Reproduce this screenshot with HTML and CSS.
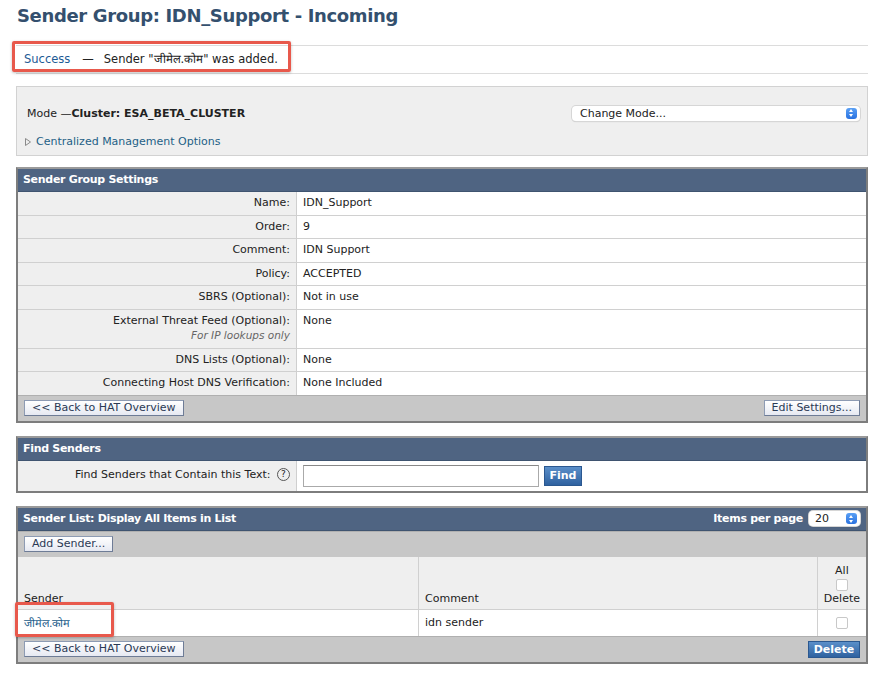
FILE: index.html
```html
<!DOCTYPE html>
<html>
<head>
<meta charset="utf-8">
<link rel="stylesheet" href="styles.css">
</head>
<body>
<h1 class="title">Sender Group: IDN_Support - Incoming</h1>

<div class="notice">
  <span class="ok">Success</span><span class="dash">—</span>Sender "जीमेल.कोम" was added.
  <span class="callout callout-notice"></span>
</div>

<div class="mode">
  <div class="mode-row">
    <div class="mode-text">Mode —<b>Cluster: ESA_BETA_CLUSTER</b></div>
    <div class="select select-mode"><span>Change Mode...</span><span class="stepper"></span></div>
  </div>
  <div class="cmo"><svg class="tri" width="6" height="8" viewBox="0 0 6 8"><polygon points="0.5,0.5 5.5,4 0.5,7.5" fill="none" stroke="#8a8a8a" stroke-width="1"/></svg>Centralized Management Options</div>
</div>

<div class="panel panel-first">
  <div class="phead">Sender Group Settings</div>
  <table class="grid">
    <tr><th>Name:</th><td>IDN_Support</td></tr>
    <tr><th>Order:</th><td>9</td></tr>
    <tr><th>Comment:</th><td>IDN Support</td></tr>
    <tr><th>Policy:</th><td>ACCEPTED</td></tr>
    <tr><th>SBRS (Optional):</th><td>Not in use</td></tr>
    <tr><th>External Threat Feed (Optional):<br><i class="hint">For IP lookups only</i></th><td>None</td></tr>
    <tr><th>DNS Lists (Optional):</th><td>None</td></tr>
    <tr><th>Connecting Host DNS Verification:</th><td>None Included</td></tr>
  </table>
  <div class="pfoot">
    <span class="btn">&lt;&lt; Back to HAT Overview</span>
    <span class="btn">Edit Settings...</span>
  </div>
</div>

<div class="panel">
  <div class="phead">Find Senders</div>
  <table class="grid">
    <tr class="find-row"><th>Find Senders that Contain this Text: <span class="help">?</span></th>
      <td><span class="input"></span><span class="btn-blue btn-find">Find</span></td></tr>
  </table>
</div>

<div class="panel">
  <div class="phead phead-split">
    <span>Sender List: Display All Items in List</span>
    <span class="ipp">Items per page <span class="select select-ipp"><span>20</span><span class="stepper"></span></span></span>
  </div>
  <div class="pbar"><span class="btn">Add Sender...</span></div>
  <table class="list">
    <tr class="lhead">
      <td class="c-sender">Sender</td>
      <td class="c-comment">Comment</td>
      <td class="c-del">All<br><span class="chk"></span><br>Delete</td>
    </tr>
    <tr class="lrow">
      <td class="c-sender"><span class="link">जीमेल.कोम</span><span class="callout callout-row"></span></td>
      <td class="c-comment">idn sender</td>
      <td class="c-del"><span class="chk chk-row"></span></td>
    </tr>
  </table>
  <div class="pfoot">
    <span class="btn">&lt;&lt; Back to HAT Overview</span>
    <span class="btn-blue btn-del">Delete</span>
  </div>
</div>
</body>
</html>
```

FILE: styles.css
```css
html, body { margin: 0; padding: 0; background: #fff; }
body {
  padding: 0 5px 0 16px;
  font-family: "DejaVu Sans", Verdana, sans-serif;
  font-size: 11px;
  color: #222;
}
.title {
  margin: 0;
  padding: 5px 0 0 1px;
  height: 34px;
  font-size: 18px;
  font-weight: bold;
  color: #34506e;
  letter-spacing: -0.35px;
}
.notice {
  position: relative;
  margin-top: 6px;
  height: 27px;
  border-top: 1px solid #dcdcdc;
  border-bottom: 1px solid #dcdcdc;
  display: flex;
  align-items: center;
  padding-left: 8px;
  padding-bottom: 2px;
  box-sizing: border-box;
  height: 29px;
  font-size: 11.5px;
}
.ok { color: #1d5a94; }
.dash { margin: 0 10px 0 12px; }
.callout {
  position: absolute;
  border: 3px solid #e8594c;
  border-radius: 2px;
  box-shadow: 0 1px 3px rgba(0,0,0,0.25);
}
.callout-notice { left: -4px; top: -5px; width: 273px; height: 25px; }

.mode {
  margin-top: 12px;
  height: 68px;
  background: #efefef;
  border: 1px solid #d2d2d2;
  padding: 0 7px 0 10px;
}
.mode-row {
  display: flex;
  justify-content: space-between;
  align-items: center;
  margin-top: 17px;
  height: 18px;
}
.mode-text b { font-weight: bold; }
.select {
  display: flex;
  align-items: center;
  justify-content: space-between;
  background: #fff;
  border-radius: 4px;
  box-shadow: 0 0 0 1px #d6d6d6, 0 1px 1px rgba(0,0,0,0.2);
  color: #222;
  font-weight: normal;
  letter-spacing: 0;
}
.select-mode { width: 277px; height: 15px; padding: 0 3px 0 8px; }
.stepper {
  width: 11px; height: 11px;
  border-radius: 3px;
  background: linear-gradient(#5aa0f5, #2a72e0);
  position: relative;
}
.stepper::before, .stepper::after {
  content: ""; position: absolute; left: 3px;
  border-left: 2.5px solid transparent; border-right: 2.5px solid transparent;
}
.stepper::before { top: 1.5px; border-bottom: 3px solid #fff; }
.stepper::after { bottom: 1.5px; border-top: 3px solid #fff; }
.cmo {
  margin-top: 13px;
  color: #1e5f86;
  display: flex;
  align-items: center;
}
.tri { margin: 0 5px 0 -2px; }

.panel {
  margin-top: 13px;
  border: 2px solid #7d7d7d;
  border-top-color: #9a9a9a;
  background: #fff;
}
.panel-first { margin-top: 11px; }
.phead {
  background: #4f6482;
  color: #fff;
  font-weight: bold;
  height: 22px;
  line-height: 22px;
  padding-left: 5px;
  border-bottom: 1px solid #3f5470;
  letter-spacing: -0.3px;
}
.phead-split { display: flex; justify-content: space-between; align-items: center; padding-right: 6px; }
.ipp { display: flex; align-items: center; gap: 6px; }
.select-ipp { width: 42px; height: 15px; padding: 0 3px 0 6px; line-height: 15px; }

.grid { width: 100%; border-collapse: collapse; }
.grid th, .grid td {
  border-bottom: 1px solid #d0d0d0;
  padding: 4px 6px 4px 6px;
  vertical-align: top;
  line-height: 14.5px;
}
.grid th {
  width: 266px;
  background: #efefef;
  text-align: right;
  font-weight: normal;
  border-right: 1px solid #cfcfcf;
}
.grid tr:last-child th, .grid tr:last-child td { border-bottom: none; }
.hint { color: #666; font-size: 10.5px; }
.pfoot, .pbar {
  background: #c7c7c7;
  border-top: 1px solid #b0b0b0;
  height: 25px;
  display: flex;
  align-items: center;
  justify-content: space-between;
  padding: 0 6px;
}
.btn {
  display: inline-block;
  height: 14px;
  line-height: 14px;
  padding: 0 7px;
  border: 1px solid #8d9bb3;
  border-right-color: #6e7c96;
  border-bottom-color: #6e7c96;
  background: linear-gradient(#ffffff, #e6e9f2);
  color: #2b3a55;
  font-size: 11px;
}
.btn-blue {
  display: inline-block;
  height: 18px;
  line-height: 18px;
  color: #fff;
  font-weight: bold;
  text-align: center;
  background: linear-gradient(#5b8fc9, #2f62a0);
  border: 1px solid #2b5890;
  font-size: 11px;
}
.find-row th { vertical-align: middle; padding-top: 6px; padding-bottom: 6px; }
.find-row td { display: flex; align-items: center; gap: 5px; padding: 4px 6px; }
.help {
  display: inline-block;
  width: 11px; height: 11px;
  line-height: 11px;
  border: 1px solid #555;
  border-radius: 50%;
  font-size: 9px;
  text-align: center;
  margin-left: 3px;
  vertical-align: 1px;
}
.input {
  width: 234px; height: 20px;
  border: 1px solid #aaa;
  border-top-color: #888;
  background: #fff;
}
.btn-find { width: 36px; }
.btn-del { width: 50px; height: 15px; line-height: 15px; }

.list { width: 100%; border-collapse: collapse; }
.list td { border-right: 1px solid #d0d0d0; padding: 0 6px; }
.list td:last-child { border-right: none; }
.lhead td { background: #efefef; height: 49px; vertical-align: bottom; padding-bottom: 3px; line-height: 14px; border-bottom: 1px solid #d0d0d0; }
.lrow td { height: 26px; }
.c-sender { width: 388px; position: relative; }
.c-del { width: 36px; text-align: center; }
.chk {
  display: inline-block;
  width: 10px; height: 10px;
  border: 1px solid #c8c8c8;
  border-radius: 2px;
  background: #fff;
  vertical-align: middle;
}
.link { color: #1b5c8a; }
.callout-row { left: -3px; top: -8px; width: 93px; height: 29px; }
```
